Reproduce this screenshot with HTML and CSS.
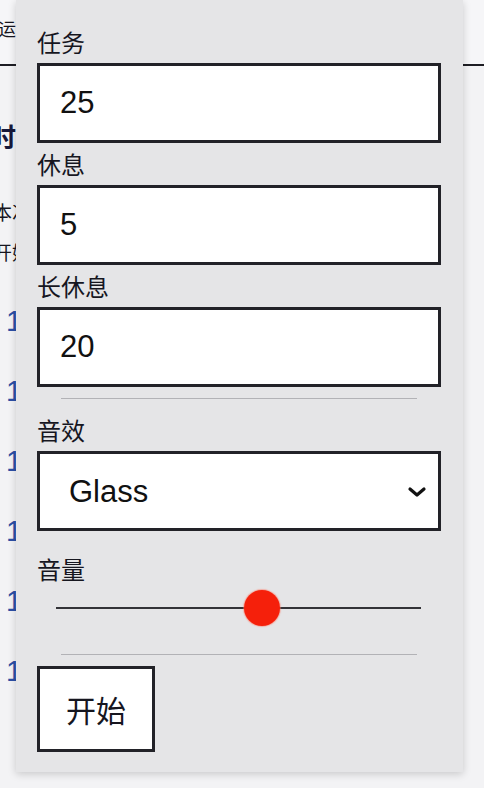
FILE: index.html
```html
<!DOCTYPE html>
<html lang="zh">
<head>
    <meta charset="UTF-8">
    <meta name="viewport" content="width=device-width, initial-scale=1.0">
    <title>番茄钟</title>
    <link rel="stylesheet" href="styles.css">
</head>
<body>
    <div class="page">
        <div class="topbar"><span class="brand">运行计时</span></div>
        <div class="content">
            <h1 class="title">时间记录</h1>
            <p class="note">本次任务</p>
            <p class="note">开始记录</p>
            <ul class="history">
                <li>1</li>
                <li>1</li>
                <li>1</li>
                <li>1</li>
                <li>1</li>
                <li>1</li>
            </ul>
        </div>
    </div>

    <div class="panel">
        <div class="field">
            <label for="work">任务</label>
            <input type="text" id="work" value="25">
        </div>
        <div class="field">
            <label for="rest">休息</label>
            <input type="text" id="rest" value="5">
        </div>
        <div class="field">
            <label for="long-rest">长休息</label>
            <input type="text" id="long-rest" value="20">
        </div>
        <hr class="divider">
        <div class="field field-sound">
            <label for="sound">音效</label>
            <div class="select-wrap">
                <select id="sound">
                    <option selected>Glass</option>
                    <option>Ping</option>
                    <option>Pop</option>
                </select>
                <svg class="chevron" width="20" height="12" viewBox="0 0 20 12">
                    <path d="M3 3 L10 9 L17 3" fill="none" stroke="#111" stroke-width="3.2" stroke-linecap="round" stroke-linejoin="round"/>
                </svg>
            </div>
        </div>
        <div class="field field-volume">
            <label for="volume">音量</label>
            <input type="range" id="volume" min="0" max="100" value="57">
        </div>
        <hr class="divider">
        <button class="start">开始</button>
    </div>
</body>
</html>
```

FILE: styles.css
```css
body {
    margin: 0;
    font-family: "Liberation Sans", "Noto Sans CJK SC", sans-serif;
    color: #16161f;
}
.page {
    height: 788px;
    overflow: hidden;
    background-color: #f3f3f5;
}
.topbar {
    height: 66px;
    border-bottom: 2px solid #1e1e24;
    box-sizing: border-box;
    padding-top: 19px;
    background-color: #f6f6f8;
}
.brand {
    display: block;
    margin-left: -2px;
    font-size: 18px;
    line-height: 22px;
}
.title {
    margin: 56px 0 0 -10px;
    font-size: 26px;
    line-height: 32px;
    color: #16183a;
}
.note {
    margin: 0 0 0 -7px;
    font-size: 19px;
    line-height: 40px;
}
.note:first-of-type {
    margin-top: 40px;
}
.history {
    list-style: none;
    margin: 12px 0 0 0;
    padding: 0 0 0 6px;
}
.history li {
    font-size: 29px;
    line-height: 70px;
    color: #2c4fa6;
}
.panel {
    position: absolute;
    left: 16px;
    top: 0;
    width: 447px;
    box-sizing: border-box;
    padding: 28px 22px 20px 21px;
    background-color: #e5e5e7;
    box-shadow: 0 2px 8px rgba(0, 0, 0, 0.18);
}
.field label {
    display: block;
    font-size: 24px;
    line-height: 32px;
    margin-bottom: 3px;
    color: #16161f;
}
.field input[type="text"], .field select {
    display: block;
    width: 100%;
    height: 80px;
    box-sizing: border-box;
    margin: 0 0 7px 0;
    padding: 0 20px;
    border: 3px solid #222228;
    border-radius: 0;
    background-color: #fff;
    font-family: "Liberation Sans", sans-serif;
    font-size: 31px;
    color: #111;
    outline: none;
}
.divider {
    height: 0;
    border: none;
    border-top: 1px solid #b2b2b6;
    margin: 11px 24px 11px;
}
.field-sound {
    padding-top: 6px;
}
.select-wrap {
    position: relative;
    margin-bottom: 24px;
}
.field select {
    margin-bottom: 0;
    padding-left: 29px;
    -webkit-appearance: none;
    appearance: none;
}
.chevron {
    position: absolute;
    right: 14px;
    top: 35px;
}
.field-volume input[type="range"] {
    display: block;
    width: 365px;
    height: 36px;
    margin: 0 0 28px 19px;
    -webkit-appearance: none;
    appearance: none;
    background: transparent;
}
.field-volume input[type="range"]::-webkit-slider-runnable-track {
    height: 2px;
    background-color: #333338;
}
.field-volume input[type="range"]::-webkit-slider-thumb {
    -webkit-appearance: none;
    width: 36px;
    height: 36px;
    margin-top: -17px;
    border-radius: 50%;
    background-color: #f5200b;
    box-shadow: 0 0 1px 1px rgba(255, 120, 100, 0.5);
}
.start {
    display: block;
    width: 118px;
    height: 86px;
    padding: 0;
    border: 3px solid #222228;
    background-color: #fff;
    font-family: "Noto Sans CJK SC", sans-serif;
    font-size: 30px;
    color: #16161f;
}
```
